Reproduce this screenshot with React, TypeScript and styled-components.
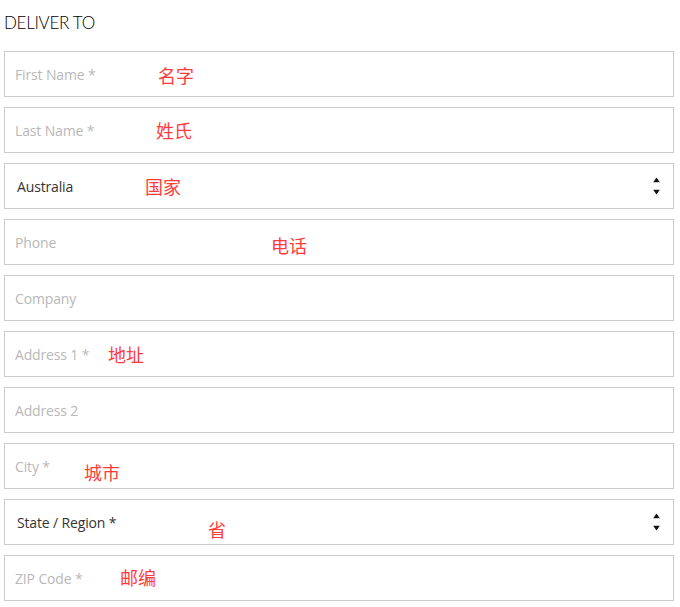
import React from "react";
import styled, { createGlobalStyle } from "styled-components";

const Global = createGlobalStyle`
  html, body { margin: 0; padding: 0; background: #fff; }
  body { font-family: "Open Sans", "Liberation Sans", sans-serif; }
  * { box-sizing: border-box; }
`;

const Page = styled.div`
  width: 680px;
  padding: 13px 6px 0 4px;
`;

const Title = styled.h2`
  margin: 0 0 18px 0;
  font-family: Lato, "Liberation Sans", sans-serif;
  font-weight: 300;
  font-size: 17px;
  line-height: 20px;
  color: #000;
  letter-spacing: -0.3px;
`;

const Fields = styled.div`
  display: flex;
  flex-direction: column;
  gap: 10px;
`;

const Field = styled.div<{ $select?: boolean }>`
  position: relative;
  height: 46px;
  border: 1px solid #cccccc;
  display: flex;
  align-items: center;
  padding: 0 0 0 ${(p) => (p.$select ? "12px" : "10px")};
  background: #fff;
`;

const Placeholder = styled.span<{ $value?: boolean }>`
  color: ${(p) => (p.$value ? "#333" : "#b8b8b8")};
  font-family: "Open Sans", "Liberation Sans", sans-serif;
  font-size: 14px;
  letter-spacing: -0.15px;
`;

const Arrows = styled.div`
  position: absolute;
  right: 13px;
  top: 50%;
  transform: translateY(-50%);
  display: flex;
  flex-direction: column;
  gap: 7px;
`;

const Note = styled.span<{ $x: number; $y: number }>`
  position: absolute;
  left: ${(p) => p.$x}px;
  top: ${(p) => p.$y}px;
  color: #ff3b3b;
  font-family: "Noto Sans CJK SC", sans-serif;
  font-size: 18px;
  line-height: 20px;
  pointer-events: none;
`;

type Row = { label: string; value?: boolean; select?: boolean; note?: string; nx?: number; ny?: number };

const rows: Row[] = [
  { label: "First Name *", note: "名字", nx: 153, ny: 13 },
  { label: "Last Name *", note: "姓氏", nx: 151, ny: 12 },
  { label: "Australia", value: true, select: true, note: "国家", nx: 140, ny: 12 },
  { label: "Phone", note: "电话", nx: 266, ny: 15 },
  { label: "Company" },
  { label: "Address 1 *", note: "地址", nx: 103, ny: 12 },
  { label: "Address 2" },
  { label: "City *", note: "城市", nx: 79, ny: 18 },
  { label: "State / Region *", value: true, select: true, note: "省", nx: 203, ny: 19 },
  { label: "ZIP Code *", note: "邮编", nx: 115, ny: 11 },
];

const ArrowIcon = ({ up }: { up?: boolean }) => (
  <svg width="7" height="5" viewBox="0 0 7 5" style={{ display: "block" }}>
    {up ? <polygon points="3.5,0 7,5 0,5" fill="#111" /> : <polygon points="0,0 7,0 3.5,5" fill="#111" />}
  </svg>
);

export default function App() {
  return (
    <>
      <Global />
      <Page>
        <Title>DELIVER TO</Title>
        <Fields>
          {rows.map((r) => (
            <Field key={r.label} $select={r.select}>
              <Placeholder $value={r.value}>{r.label}</Placeholder>
              {r.select && (
                <Arrows>
                  <ArrowIcon up />
                  <ArrowIcon />
                </Arrows>
              )}
              {r.note && (
                <Note $x={r.nx!} $y={r.ny!}>
                  {r.note}
                </Note>
              )}
            </Field>
          ))}
        </Fields>
      </Page>
    </>
  );
}
